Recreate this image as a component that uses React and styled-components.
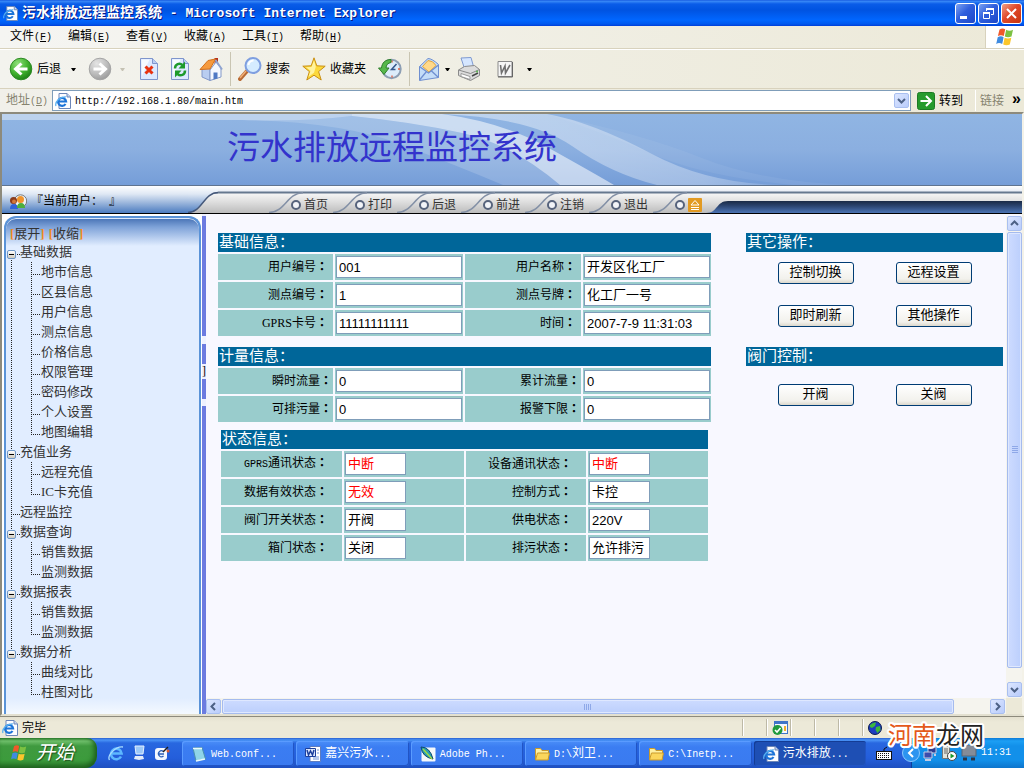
// src/App.jsx
import React from 'react';
import styled, { createGlobalStyle, css } from 'styled-components';

const GlobalStyle = createGlobalStyle`
  * {
    box-sizing: border-box;
  }

  body {
    margin: 0;
    font-family: 'Liberation Serif', 'Noto Sans CJK SC', serif;
    font-size: 12px;
    line-height: 16px;
    color: #000;
  }

  button, input {
    margin: 0;
    padding: 0;
    border: 0;
    border-radius: 0;
    background: none;
    color: inherit;
    font: inherit;
  }

  a {
    color: inherit;
    text-decoration: none;
  }

  svg {
    display: block;
    flex: none;
  }
`;

/* ---------- window ---------- */

const Window = styled.div`
  position: relative;
  display: flex;
  flex-direction: column;
  min-height: 100vh;
  background: #ece9d8;
`;

const Mono = styled.span`
  font-family: 'Liberation Mono', monospace;
  font-size: ${props => props.$size || 10}px;
  white-space: pre;
`;

const TitleBar = styled.header`
  display: flex;
  align-items: center;
  gap: 4px;
  height: 26px;
  padding: 0 2px 0 3px;
  background: linear-gradient(#0a4ad8 0, #3c8cf8 1px, #0a5ce8 4px, #0053e1 10px, #0066ff 20px, #0058ee 24px, #003dd7 26px);
`;

const Title = styled.h1`
  flex: 1;
  margin: 0;
  font-size: 14px;
  font-weight: bold;
  color: #fff;
  text-shadow: 1px 1px #0a1883;
  white-space: nowrap;
`;

const WindowButtons = styled.div`
  display: flex;
  gap: 2px;
`;

const WindowButton = styled.button`
  display: flex;
  align-items: center;
  justify-content: center;
  width: 21px;
  height: 21px;
  border: 1px solid #fff;
  border-radius: 3px;
  background: ${props => (props.$close
    ? 'linear-gradient(135deg, #f0a088, #e0492a 45%, #c8350f)'
    : 'linear-gradient(135deg, #7ba2f2, #2f5fdd 45%, #1d47c8)')};
`;

const MenuBar = styled.nav`
  display: flex;
  height: 23px;
  border-bottom: 1px solid #d8d2bd;
  background: linear-gradient(90deg, #f5f5f2, #ece9d8);
`;

const MenuList = styled.div`
  display: flex;
  flex: 1;
  align-items: center;
  gap: 16px;
  padding-left: 10px;
`;

const MenuItem = styled.button`
  width: 42px;
  white-space: nowrap;
  text-align: left;
`;

const FlagBox = styled.div`
  display: flex;
  align-items: center;
  justify-content: center;
  width: 39px;
  border-left: 1px solid #d8d2bd;
  background: #fff;
`;

const ToolBar = styled.div`
  display: flex;
  align-items: center;
  gap: 7px;
  height: 40px;
  padding-left: 9px;
  border-top: 1px solid #fff;
  border-bottom: 1px solid #d8d2bd;
  background: linear-gradient(90deg, #f3f3ee, #ece9d8);
`;

const Tool = styled.button`
  display: flex;
  align-items: center;
  gap: 4px;
  padding-right: ${props => (props.$wide ? 5 : 0)}px;
  white-space: nowrap;
`;

const Caret = styled.span`
  width: 5px;
  margin-left: ${props => (props.$gap || 0)}px;
  border: solid transparent;
  border-width: 3px 2px 0;
  border-top-color: ${props => (props.$dim ? '#c5c2b4' : '#000')};
`;

const Separator = styled.span`
  width: 1px;
  height: 34px;
  background: #c9c5b2;
`;

const AddressBar = styled.div`
  display: flex;
  align-items: center;
  gap: 6px;
  height: 23px;
  padding: 0 3px 0 6px;
  background: linear-gradient(90deg, #f1f0ea, #ece9d8);
`;

const AddressLabel = styled.label`
  width: 40px;
  color: #86836f;
  white-space: nowrap;
`;

const AddressBox = styled.div`
  display: flex;
  flex: 1;
  align-items: center;
  gap: 4px;
  height: 21px;
  padding: 0 1px 0 2px;
  border: 1px solid #7f9db9;
  background: #fff;
`;

const AddressInput = styled.input`
  flex: 1;
  min-width: 0;
  padding-top: 2px;
  font-family: 'Liberation Mono', monospace;
  font-size: 10px;
  outline: none;
`;

const GoButton = styled.button`
  display: flex;
  align-items: center;
  gap: 4px;
  width: 52px;
  white-space: nowrap;
`;

const Links = styled.div`
  display: flex;
  align-items: center;
  gap: 8px;
  height: 21px;
  padding-left: 4px;
  border-left: 1px solid #fff;
  color: #86836f;
  white-space: nowrap;
`;

const More = styled.span`
  padding-bottom: 4px;
  color: #000;
  font-family: 'Liberation Sans', sans-serif;
  font-size: 16px;
  font-weight: bold;
`;

/* ---------- page ---------- */

const Page = styled.div`
  display: flex;
  flex: 1;
  flex-direction: column;
  border: solid #8d8a7c;
  border-width: 2px 0 0 2px;
  border-right: 2px solid #f4f2e8;
  border-bottom: 2px solid #e3e0d0;
  background: #fff;
`;

const Banner = styled.div`
  position: relative;
  height: 71px;
  padding: 11px 0 0 225px;
  overflow: hidden;
  background: linear-gradient(#90b5e3, #8bafe0 50%, #759dd8);
`;

const BannerArt = styled.svg`
  position: absolute;
  top: 0;
  left: 0;
`;

const BannerTitle = styled.h2`
  position: relative;
  margin: 0;
  font-size: 33px;
  font-weight: 400;
  line-height: 46px;
  color: #3333cc;
  white-space: nowrap;
`;

const NavBar = styled.nav`
  display: flex;
  height: 29px;
  border-top: 1px solid #5f7490;
  border-bottom: 1px solid #000;
  background: linear-gradient(#fff 0, #e9eef6 5px, #66788f 6px, #66788f 7px, #f4f4f4 8px, #dedede 16px, #bcbcbc 27px);
`;

const UserArea = styled.div`
  display: flex;
  align-items: center;
  gap: 4px;
  width: 186px;
  padding: 4px 0 0 7px;
  background: linear-gradient(#fff, #dfe8f4 8px, #4c7cc0 27px);
  white-space: pre;
`;

const Tabs = styled.div`
  display: flex;
  padding-left: 51px;
`;

const Tab = styled.a`
  position: relative;
  display: flex;
  align-items: center;
  gap: 3px;
  width: ${props => (props.$last ? 53 : 64)}px;
  padding: 10px 0 0 22px;
  color: #333;
  line-height: 16px;
  white-space: nowrap;
`;

const TabEdge = styled.svg`
  position: absolute;
  top: 6px;
  left: 0;
`;

const Dot = styled.span`
  flex: none;
  width: 10px;
  height: 10px;
  border: 2px solid #56637c;
  border-radius: 50%;
  background: #f2f4f8;
`;

const NavRest = styled.div`
  flex: 1;
  margin-top: 15px;
  background: linear-gradient(#1a2a45, #2c4570 5px, #4c74b4);
`;

const Body = styled.div`
  display: flex;
  flex: 1;
`;

const Side = styled.aside`
  display: flex;
  width: 200px;
  padding: 2px 1px 0 2px;
  background: #fff;
`;

const SidePanel = styled.div`
  flex: 1;
  border: 2px solid #5a93d8;
  border-bottom: 0;
  border-radius: 12px 12px 0 0;
  box-shadow: inset 0 1px #dce9fa;
  background: linear-gradient(#4671b4 0, #7ea2d8 9px, #e1edff 28px, #e1edff calc(100% - 16px), #f4f9ff);
  color: #333;
  font-size: 13px;
`;

const TreeHead = styled.div`
  display: flex;
  gap: 4px;
  height: 24px;
  padding: 8px 0 0 4px;
`;

const Bracket = styled.span`
  color: #f08a1c;
  font-weight: bold;
`;

const TreeRow = styled.div`
  display: flex;
  height: 20px;
  line-height: 20px;
  white-space: nowrap;
`;

const dots = 'repeating-linear-gradient(#222 0 1px, transparent 1px 2px)';
const dashes = 'repeating-linear-gradient(90deg, #222 0 1px, transparent 1px 2px)';

const Rail = styled.span`
  width: 14px;
  padding: 8px 0 0 1px;
  background-repeat: no-repeat;
  ${props => props.$line === 'full' && css`
    background-image: ${dots}, ${dashes};
    background-position: 5px 0, 5px 12px;
    background-size: 1px 100%, ${props.$leaf ? 0 : 9}px 1px;
  `}
  ${props => props.$line === 'start' && css`
    background-image: ${dots}, ${dashes};
    background-position: 5px 12px, 5px 12px;
    background-size: 1px 8px, 9px 1px;
  `}
  ${props => props.$line === 'end' && css`
    background-image: ${dots}, ${dashes};
    background-position: 5px 0, 5px 12px;
    background-size: 1px 12px, 9px 1px;
  `}
`;

const Branch = styled.span`
  width: 10px;
  margin-left: 11px;
  background-image: ${dots}, ${dashes};
  background-repeat: no-repeat;
  background-position: 0 0, 0 12px;
  background-size: 1px ${props => (props.$last ? '12px' : '100%')}, 100% 1px;
`;

const Toggle = styled.button`
  display: flex;
  align-items: center;
  justify-content: center;
  width: 9px;
  height: 9px;
  border: 1px solid #6f98c8;
  border-radius: 2px;
  background: linear-gradient(#fff, #cfcabd);
`;

const Divider = styled.div`
  display: flex;
  flex-direction: column;
  width: 4px;
  padding-top: 2px;
  background: #eef1ff;
`;

const DividerBar = styled.span`
  height: ${props => props.$height}px;
  margin-bottom: ${props => props.$gap || 0}px;
  background: #6c7be0;
`;

const DividerRest = styled.span`
  flex: 1;
  background: #6c7be0;
`;

const DividerGrip = styled.button`
  display: flex;
  justify-content: center;
  height: 15px;
  overflow: hidden;
  line-height: 15px;
`;

const Frame = styled.main`
  display: grid;
  flex: 1;
  grid-template-columns: minmax(0, 1fr) 16px;
  grid-template-rows: minmax(0, 1fr) 16px;
  padding-top: 2px;
  background: #f8f8ff;
`;

const Content = styled.div`
  display: grid;
  grid-template-columns: minmax(0, 497fr) minmax(0, 257fr);
  gap: 33px;
  padding: 17px 3px 0 10px;
`;

const Section = styled.section`
  margin: 0 ${props => (props.$inset ? 3 : 0)}px ${props => (props.$tight ? 6 : 9)}px;
`;

const SectionTitle = styled.h3`
  height: 19px;
  margin: 0 ${props => (props.$flush ? 0 : 2)}px;
  padding-left: 1px;
  background: #006699;
  color: #fff;
  font-size: 15px;
  font-weight: normal;
  line-height: 18px;
`;

const InfoTable = styled.table`
  width: 100%;
  table-layout: fixed;
  border-spacing: 2px;
`;

const LabelCell = styled.th`
  width: ${props => props.$width}px;
  height: 26px;
  padding: 0 ${props => props.$pad}px 2px 0;
  background: #99cccc;
  font-weight: normal;
  text-align: right;
  white-space: nowrap;
`;

const Colon = styled.span`
  font-family: 'Noto Sans CJK TC', sans-serif;
  font-weight: bold;
`;

const ValueCell = styled.td`
  width: ${props => props.$width}px;
  height: 26px;
  padding: 2px 1px;
  background: #99cccc;
`;

const Field = styled.input`
  display: block;
  width: ${props => (props.$short ? '61px' : '100%')};
  height: 22px;
  padding: 0 2px ${props => (props.$raised ? 4 : 0)}px;
  border: 1px solid #7f9db9;
  background: #fff;
  color: ${props => (props.$alert ? '#ff0000' : '#000')};
  font-family: 'Liberation Sans', 'Noto Sans CJK SC', sans-serif;
  font-size: 13px;
`;

const Actions = styled.div`
  display: grid;
  grid-template-columns: 76px 76px;
  justify-content: center;
  gap: 21px 42px;
  padding: ${props => (props.$low ? 18 : 10)}px 0 20px;
`;

const ActionButton = styled.button`
  height: 22px;
  padding-bottom: 2px;
  border: 1px solid #003c74;
  border-radius: 3px;
  background: linear-gradient(#fff, #f2f1ec 80%, #dcd8cc);
  font-size: 13px;
  line-height: 18px;
`;

const ScrollBar = styled.div`
  display: flex;
  flex-direction: ${props => (props.$vertical ? 'column' : 'row')};
  gap: 1px;
  padding: ${props => (props.$vertical ? '0 0 1px 1px' : '1px 1px 0 0')};
  background: #f5f4ee;
`;

const ScrollButton = styled.button`
  display: flex;
  flex: none;
  align-items: center;
  justify-content: center;
  width: 15px;
  height: 15px;
  border: 1px solid #a9bff0;
  border-radius: 2px;
  background: linear-gradient(135deg, #dce6ff, #b9ccfb);
`;

const Thumb = styled.div`
  display: flex;
  flex: ${props => props.$size} 1 0;
  align-items: center;
  justify-content: center;
  border: 1px solid #a5bbee;
  border-radius: 2px;
  box-shadow: inset 0 0 0 1px #dfe8ff;
  background: linear-gradient(${props => (props.$vertical ? '90deg' : '180deg')}, #cddbff, #bccffc);
`;

const ThumbSpace = styled.div`
  flex: ${props => props.$size} 1 0;
`;

const Corner = styled.div`
  background: #ece9d8;
`;

/* ---------- status bar and task bar ---------- */

const StatusBar = styled.footer`
  display: flex;
  align-items: center;
  gap: 4px;
  height: 22px;
  padding: 0 2px;
  border-top: 1px solid #8d8a7c;
  background: linear-gradient(#e4e0cf, #ece9d8 5px);
`;

const StatusText = styled.span`
  flex: 1;
`;

const StatusPanes = styled.div`
  display: flex;
`;

const Pane = styled.span`
  display: flex;
  align-items: center;
  gap: 4px;
  width: ${props => (props.$wide ? 160 : 24)}px;
  height: 17px;
  padding-left: 5px;
  border-left: 1px solid #bdb9a6;
  box-shadow: inset 1px 0 #fff;
`;

const TaskBar = styled.footer`
  display: flex;
  height: 30px;
  background: linear-gradient(#2a5fd0 0, #4a94f6 2px, #2867e0 5px, #245edb 20px, #1e4fc0 30px);
  color: #fff;
`;

const StartButton = styled.button`
  display: flex;
  align-items: center;
  gap: 8px;
  width: 97px;
  padding-left: 10px;
  border-radius: 0 10px 12px 0;
  box-shadow: inset -3px -2px 5px #1c5f1c;
  background: linear-gradient(#2f7f2f, #6fbf6b 3px, #3f9a3f 8px, #3c9b3c 22px, #2d7d2d);
  font-size: 19px;
  font-style: italic;
  line-height: 26px;
  text-shadow: 1px 1px 1px #1d4f1d;
  white-space: nowrap;
`;

const QuickLaunch = styled.div`
  display: flex;
  align-items: center;
  gap: 7px;
  width: 85px;
  padding-left: 11px;
`;

const TaskList = styled.div`
  display: flex;
  flex: 1;
  gap: 2px;
  padding: 3px 0 2px;
`;

const Task = styled.button`
  display: flex;
  flex: 1;
  align-items: center;
  gap: 4px;
  min-width: 0;
  padding-left: 9px;
  border-radius: 3px;
  box-shadow: inset 1px 1px ${props => (props.$active ? '#143c94' : '#5a9bff')}, inset -1px -1px #2154c4;
  background: ${props => (props.$active ? '#1e4fb4' : 'linear-gradient(#4a8ef8, #3b7df2 6px, #3a7af0)')};
  white-space: nowrap;
`;

const Keyboard = styled.div`
  display: flex;
  align-items: center;
  width: 45px;
  padding-left: 10px;
`;

const Tray = styled.div`
  position: relative;
  display: flex;
  align-items: center;
  gap: 4px;
  width: 113px;
  padding-left: 11px;
  border-left: 1px solid #0b3f9c;
  background: linear-gradient(#0c7ad8, #1c9ff4 3px, #1290ea 8px, #1290ea 22px, #0d74cc);
`;

const TrayToggle = styled.button`
  position: absolute;
  top: 6px;
  left: -10px;
`;

const Watermark = styled.div`
  position: absolute;
  right: 40px;
  bottom: 21px;
  color: #222;
  font-family: 'Noto Sans CJK SC', sans-serif;
  font-size: 24px;
  line-height: 26px;
  text-shadow: 2px 0 #fff, -2px 0 #fff, 0 2px #fff, 0 -2px #fff, 1px 2px #fff, -1px 2px #fff, 1px -2px #fff, -1px -2px #fff, 2px 1px #fff, -2px 1px #fff, 2px -1px #fff, -2px -1px #fff;
`;

const Accent = styled.span`
  color: #e4591a;
`;

/* ---------- icons ---------- */

const IePage = ({ size = 16 }) => (
  <svg width={size} height={size} viewBox="0 0 16 16">
    <path d="M4 .5h8l3.500 3.500v11.500H4z" fill="#fdfdff" stroke="#6c86b8" />
    <path d="M12 .5V4h3.500" fill="#c9d8f0" stroke="#6c86b8" />
    <path d="M10.500 11a4 4 0 1 1 .6-2.500H3.500" fill="none" stroke="#1d74d8" strokeWidth="2.200" />
    <path d="M1 13C-.5 9 5 3.500 11 4" fill="none" stroke="#58b0f0" strokeWidth="1.200" />
  </svg>
);

const IeLogo = () => (
  <svg width="16" height="16" viewBox="0 0 16 16">
    <path d="M13 11.500A5.300 5.300 0 1 1 13.600 8.500H4" fill="none" stroke="#5db8ff" strokeWidth="2.600" />
    <path d="M1.500 15C-1 11 7 1 15 2" fill="none" stroke="#a8dcff" strokeWidth="1.300" />
  </svg>
);

const Flag = ({ size = 20 }) => (
  <svg width={size} height={size} viewBox="0 0 20 20">
    <path d="M4.500 2.500Q7.500.5 10.200 2.300L8.800 9Q6 7.300 2.900 9z" fill="#f0592a" />
    <path d="M11.200 2.800Q14.500 4.500 18 2.800L16.500 9.500Q13 11 9.800 9.500z" fill="#7cc142" />
    <path d="M2.700 10.200Q6 8.500 8.600 10.200L7.200 17Q4 15.200 1.200 17z" fill="#3f8be0" />
    <path d="M9.600 10.700Q13 12.300 16.300 10.700L14.800 17.500Q11.500 19 8.200 17.500z" fill="#fbc62c" />
  </svg>
);

const ArrowCircle = ({ forward }) => (
  <svg width="24" height="24" viewBox="0 0 24 24">
    <defs>
      <radialGradient id={forward ? 'fwd' : 'bck'} cx=".35" cy=".25" r=".8">
        <stop offset="0" stopColor={forward ? '#e4e4e4' : '#8fe07a'} />
        <stop offset=".6" stopColor={forward ? '#bcbcbc' : '#3fb02c'} />
        <stop offset="1" stopColor={forward ? '#9a9a9a' : '#1c7d16'} />
      </radialGradient>
    </defs>
    <circle cx="12" cy="12" r="10.800" fill={`url(#${forward ? 'fwd' : 'bck'})`} stroke={forward ? '#a5a5a5' : '#2d8a24'} />
    <path
      d={forward ? 'M5.500 12h11M11.500 6.500 17.500 12l-6 5.500' : 'M18.500 12h-11M12.500 6.500 6.500 12l6 5.500'}
      fill="none"
      stroke="#fff"
      strokeWidth="3"
    />
  </svg>
);

const PageShape = ({ children }) => (
  <svg width="24" height="24" viewBox="0 0 24 24">
    <path d="M3.500 1.500h12l5 5v16h-17z" fill="#dce9ff" stroke="#7f95cc" />
    <path d="M4.500 2.500h8L5 19z" fill="#f6faff" />
    <path d="M15.500 1.500v5h5" fill="#b9cdf2" stroke="#7f95cc" />
    {children}
  </svg>
);

const StopIcon = () => (
  <PageShape>
    <path d="m8.500 9.500 7 7m0-7-7 7" stroke="#e8320f" strokeWidth="3" />
  </PageShape>
);

const RefreshIcon = () => (
  <PageShape>
    <path d="M7 11.500c0-4.500 4.500-6 7.500-3.500" fill="none" stroke="#1c9a2c" strokeWidth="2.500" />
    <path d="M17 4.500v7h-6.500z" fill="#1c9a2c" />
    <path d="M17 13.500c0 4.500-4.500 6-7.500 3.500" fill="none" stroke="#1c9a2c" strokeWidth="2.500" />
    <path d="M7 20.500v-7h6.500z" fill="#1c9a2c" />
  </PageShape>
);

const HomeIcon = () => (
  <svg width="24" height="24" viewBox="0 0 24 24">
    <path d="M15.500 1h3.500v7h-3.500z" fill="#b5321c" />
    <path d="M3 12v8l8 3.500V11z" fill="#b9cdf0" stroke="#8298c8" />
    <path d="M11 23.500 22 20v-9l-5-6-6 8z" fill="#f4f8ff" stroke="#8298c8" />
    <path d="M1 12.500 9 3.500 16.500 2 11 12z" fill="#f59a3e" stroke="#d3701c" />
    <path d="m16.500 3 6.500 9.500" stroke="#8ea3d0" strokeWidth="2" />
    <path d="M14.500 15.500h4v6l-4 1z" fill="#4f79c4" />
  </svg>
);

const SearchIcon = () => (
  <svg width="24" height="24" viewBox="0 0 24 24">
    <path d="m2 22 7-8" stroke="#b86a34" strokeWidth="4" strokeLinecap="round" />
    <path d="m2 21 6-7" stroke="#f0b078" strokeWidth="1.500" />
    <circle cx="15" cy="8.500" r="7.500" fill="#d5ecff" stroke="#7f9fe0" strokeWidth="2" />
    <path d="M10.500 8a5 5 0 0 1 5-4.500" fill="none" stroke="#fff" strokeWidth="2" />
  </svg>
);

const StarIcon = () => (
  <svg width="24" height="24" viewBox="0 0 24 24">
    <path d="m12 .8 2.800 8 8.400.4-6.600 5.400 2.600 8.400L12 18.200 4.800 23l2.600-8.400L.8 9.200l8.400-.4z" fill="#fcd93c" stroke="#c98f12" />
    <path d="m12 3.500 1.800 6.300-1.800 6-5.500 4 2-6-4.500-3.500 5.500-.3z" fill="#fff3a0" />
  </svg>
);

const HistoryIcon = () => (
  <svg width="24" height="24" viewBox="0 0 24 24">
    <circle cx="13.500" cy="12" r="9.200" fill="#dcecfa" stroke="#8d9fb4" strokeWidth="2" />
    <path d="m18.500 7-5 5.500h4" fill="none" stroke="#33568c" strokeWidth="1.500" />
    <path d="M14 3.500v2M22 12h-2M14 20.500v-2" stroke="#e05a3c" strokeWidth="1.300" />
    <path d="M13 2.500C7 2.500 4 6 3.500 11H.5L6 17.500 11 11H8c0-3 2-5 5-5.500z" fill="#57b84c" stroke="#2f7f2c" />
  </svg>
);

const MailIcon = () => (
  <svg width="24" height="24" viewBox="0 0 24 24">
    <path d="M2.500 9.500 11 1.500q4 0 10.500 6v13l-19 3z" fill="#c4ddf8" stroke="#6f8fd0" />
    <path d="M5.500 9.500 11 3.500q5 0 8 5l-7 6.500z" fill="#ffd98a" stroke="#e0a43c" />
    <path d="m2.500 9.500 9 6.500 10-8M2.500 23l7-8.500m12 6-7-6.500" fill="none" stroke="#6f8fd0" strokeWidth="1.300" />
  </svg>
);

const PrintIcon = () => (
  <svg width="24" height="24" viewBox="0 0 24 24">
    <path d="m4 1 10-.5 2.500 9-9 2z" fill="#d5e6ff" stroke="#7f9ad0" />
    <path d="m1.500 13 6-3.500 10-1 5 4v6l-9 5-12-5z" fill="#dcdcdc" stroke="#8a8a8a" />
    <path d="m1.500 13 12 3.500 9-4" fill="none" stroke="#8a8a8a" />
    <path d="m4 16.500 9 3v3l-9-3z" fill="#fff" stroke="#999" />
    <path d="m15 19 6-3" stroke="#444" strokeWidth="1.500" />
    <circle cx="20" cy="14.500" r="1" fill="#57b84c" />
  </svg>
);

const WordIcon = () => (
  <svg width="24" height="24" viewBox="0 0 24 24">
    <path d="M5 4.500h14v15H5z" fill="#f6f6f6" stroke="#8a8a8a" />
    <path d="M19.500 5v15H5" fill="none" stroke="#666" />
    <path d="m7.500 8 1 8L12 9l.5 7L17 8" fill="none" stroke="#707070" strokeWidth="1.600" />
  </svg>
);

const GoIcon = () => (
  <svg width="18" height="18" viewBox="0 0 18 18">
    <rect x=".5" y=".5" width="17" height="17" rx="2" fill="#259a2c" stroke="#1c7a24" />
    <path d="M3.500 9h10M9 4l5 5-5 5" fill="none" stroke="#fff" strokeWidth="2" />
  </svg>
);

const Chevron = ({ dir }) => {
  const paths = {
    up: 'M1 6 4.500 2.500 8 6',
    down: 'M1 3 4.500 6.500 8 3',
    left: 'M6 1 2.500 4.500 6 8',
    right: 'M3 1 6.500 4.500 3 8',
  };
  return (
    <svg width="9" height="9" viewBox="0 0 9 9">
      <path d={paths[dir]} fill="none" stroke="#4d6185" strokeWidth="2" />
    </svg>
  );
};

const Grip = ({ vertical }) => (
  <svg width="8" height="8" viewBox="0 0 8 8">
    <path d={vertical ? 'M1 .5h6m-6 2h6m-6 2h6m-6 2h6' : 'M.5 1v6m2-6v6m2-6v6m2-6v6'} stroke="#8ea8e8" />
  </svg>
);

const UsersIcon = () => (
  <svg width="18" height="16" viewBox="0 0 18 16">
    <circle cx="11.500" cy="7" r="6.200" fill="#eef2f6" stroke="#777" />
    <path d="M1 15q0-5 4-5t4 5z" fill="#2f63d8" />
    <path d="M8 14q0-5 4-5t4 5z" fill="#4cae3c" />
    <circle cx="4.500" cy="6.500" r="3.500" fill="#8a3c1c" />
    <circle cx="5" cy="7.500" r="2" fill="#d2783c" />
    <circle cx="11.500" cy="5.500" r="3.500" fill="#f0942c" />
  </svg>
);

const UpIcon = () => (
  <svg width="14" height="14" viewBox="0 0 14 14">
    <rect width="14" height="14" rx="1" fill="#e29a22" />
    <path d="M7 2.500 11 7H3zM3 9.500h8M3 11.500h8" fill="none" stroke="#fff" />
  </svg>
);

const NotepadIcon = () => (
  <svg width="16" height="16" viewBox="0 0 16 16">
    <path d="m2 2 9-.5L14.500 13 5 15z" fill="#8fd4e8" stroke="#4a8fae" />
    <path d="M2 2.500h9M5 15l9-2" stroke="#e8f8fc" strokeWidth="1.500" />
  </svg>
);

const WordDocIcon = () => (
  <svg width="16" height="16" viewBox="0 0 16 16">
    <path d="M5 .5h10.500v15H5z" fill="#fff" stroke="#5d7cc0" />
    <path d="M8 11h6m-6 2h6M12 4h2m-2 3h2" stroke="#6f94d8" />
    <path d="M.5 2.500h10v8H.5z" fill="#dce8ff" stroke="#1c3f9c" />
    <path d="m2 4 1.500 5 2-4 2 4L9 4" fill="none" stroke="#1c3f9c" strokeWidth="1.500" />
  </svg>
);

const PhotoIcon = () => (
  <svg width="16" height="16" viewBox="0 0 16 16">
    <rect x="1.500" y="1.500" width="14" height="14" rx="1" fill="#f4f8fa" />
    <path d="M1 1q9 0 12 12Q2 11 1 1z" fill="#2a9cb4" stroke="#0c4a6c" />
    <path d="m3 3 9 10" stroke="#a5e03c" strokeWidth="1.300" />
  </svg>
);

const FolderIcon = () => (
  <svg width="16" height="16" viewBox="0 0 16 16">
    <path d="M1.500 13.500v-11h5l1.500 2h6.500v9z" fill="#fff0a0" stroke="#c99a2c" />
    <path d="m1.500 14 2-7h12l-1.500 7z" fill="#fbd65c" stroke="#c99a2c" />
  </svg>
);

const ComputerIcon = () => (
  <svg width="16" height="16" viewBox="0 0 16 16">
    <path d="M4 1h9l-1 8H5z" fill="#9cc8f8" stroke="#e4f0ff" />
    <path d="M4 11h8l1 3-5 1-5-1z" fill="#e4ecf8" />
  </svg>
);

const ToolsIcon = () => (
  <svg width="16" height="16" viewBox="0 0 16 16">
    <rect x="1" y="3" width="12" height="12" rx="3" fill="#f4f8ff" />
    <path d="M9.500 6.500a3 3 0 1 0 0 4.500M5 9h5" fill="none" stroke="#2c5fb8" strokeWidth="1.300" />
    <path d="m9 7 5-5" stroke="#1c1c1c" strokeWidth="1.500" />
    <circle cx="14" cy="6" r="1.500" fill="#e05a2c" />
  </svg>
);

const CheckPageIcon = () => (
  <svg width="16" height="16" viewBox="0 0 16 16">
    <rect x="2.500" y="1.500" width="13" height="12" fill="#f4f8ff" stroke="#3f74c8" />
    <path d="M2 2.500h14" stroke="#3f74c8" strokeWidth="3" />
    <path d="M13 6v5" stroke="#f0b02c" strokeWidth="2" />
    <circle cx="5.500" cy="10" r="5" fill="#1f9a3c" />
    <path d="m3 10 2 2 3.500-4" fill="none" stroke="#fff" strokeWidth="1.600" />
  </svg>
);

const GlobeIcon = () => (
  <svg width="14" height="14" viewBox="0 0 14 14">
    <circle cx="7" cy="7" r="6.500" fill="#1c3cc0" stroke="#0c1c50" />
    <path d="M2 4q3-3 6-2.500L7 5 4 7 2 6zM8 6l4-1 .5 4-3 3-2-3z" fill="#3cb83c" />
  </svg>
);

const KeyboardIcon = () => (
  <svg width="16" height="16" viewBox="0 0 16 16">
    <path d="M8 6V4l3-2" fill="none" stroke="#111" />
    <rect x=".5" y="6.500" width="15" height="8" fill="#fff" stroke="#111" />
    <path d="M2 8.500h12M2 10.500h12M2 12.500h12" stroke="#111" strokeDasharray="1 1" />
  </svg>
);

const NetworkIcon = () => (
  <svg width="14" height="16" viewBox="0 0 14 16">
    <path d="M5 2h8v6H5z" fill="#2c3c90" stroke="#c4cce4" />
    <path d="M1 7h8v6H1z" fill="#3c4cac" stroke="#c4cce4" />
    <path d="M2 15h6m3-5h2" stroke="#c4cce4" strokeWidth="2" />
  </svg>
);

const ServerIcon = () => (
  <svg width="16" height="16" viewBox="0 0 16 16">
    <path d="M1.500 1.500h7v12h-7z" fill="#e4e4dc" stroke="#777" />
    <path d="M3 4h4M3 6h4M3 8h4" stroke="#666" />
    <circle cx="11" cy="11" r="4.500" fill="#fff" stroke="#444" />
    <path d="m9.500 8.500 4 2.500-4 2.500z" fill="#1f9a2c" />
  </svg>
);

const MonitorIcon = () => (
  <svg width="16" height="16" viewBox="0 0 16 16">
    <rect x="1" y="0" width="14" height="11" fill="#848c98" stroke="#5c6470" />
    <path d="M2 14h4m4 0h4" stroke="#2c3444" strokeWidth="3" />
  </svg>
);

/* ---------- data ---------- */

const menus = [
  ['文件', 'F'],
  ['编辑', 'E'],
  ['查看', 'V'],
  ['收藏', 'A'],
  ['工具', 'T'],
  ['帮助', 'H'],
];

const tabs = ['首页', '打印', '后退', '前进', '注销', '退出'];

const tree = [
  {
    name: '基础数据',
    items: ['地市信息', '区县信息', '用户信息', '测点信息', '价格信息', '权限管理', '密码修改', '个人设置', '地图编辑'],
  },
  { name: '充值业务', items: ['远程充值', 'IC卡充值'] },
  { name: '远程监控', items: [] },
  { name: '数据查询', items: ['销售数据', '监测数据'] },
  { name: '数据报表', items: ['销售数据', '监测数据'] },
  { name: '数据分析', items: ['曲线对比', '柱图对比'] },
];

const basicRows = [
  [['用户编号', '001'], ['用户名称', '开发区化工厂']],
  [['测点编号', '1'], ['测点号牌', '化工厂一号']],
  [['GPRS卡号', '11111111111'], ['时间', '2007-7-9 11:31:03']],
];

const meterRows = [
  [['瞬时流量', '0'], ['累计流量', '0']],
  [['可排污量', '0'], ['报警下限', '0']],
];

const stateRows = [
  [[<><Mono>GPRS</Mono>通讯状态</>, '中断', true], ['设备通讯状态', '中断', true]],
  [['数据有效状态', '无效', true], ['控制方式', '卡控']],
  [['阀门开关状态', '开阀'], ['供电状态', '220V']],
  [['箱门状态', '关闭'], ['排污状态', '允许排污']],
];

const tasks = [
  { icon: <NotepadIcon />, latin: 'Web.conf...' },
  { icon: <WordDocIcon />, text: '嘉兴污水', latin: '...' },
  { icon: <PhotoIcon />, latin: 'Adobe Ph...' },
  { icon: <FolderIcon />, prefix: 'D:\\', text: '刘卫', latin: '...' },
  { icon: <FolderIcon />, latin: 'C:\\Inetp...' },
  { icon: <IePage />, text: '污水排放', latin: '...', active: true },
];

// Chinese values sit a little higher in their box than digits do
const isChinese = value => /[\u4e00-\u9fff]/.test(value);

/* ---------- parts ---------- */

const BannerCurves = () => (
  <BannerArt width="1020" height="71" viewBox="0 0 1020 71" aria-hidden="true">
    <defs>
      <linearGradient id="haze" x1="0" x2="1" y1="0" y2="0">
        <stop offset="0" stopColor="#fff" stopOpacity=".42" />
        <stop offset=".75" stopColor="#fff" stopOpacity=".3" />
        <stop offset="1" stopColor="#fff" stopOpacity=".1" />
      </linearGradient>
    </defs>
    <path d="M0 0H350V2Q300 8 240 6H0z" fill="#fff" opacity=".4" />
    <path d="M240 6Q340 8 398 30T501 71H558Q510 30 460 19T350 2Q300 8 240 6z" fill="#fff" opacity=".16" />
    <path d="M350 0H440Q500 8 545 33T612 71H558Q510 30 460 19T350 2z" fill="#fff" opacity=".55" />
    <path d="M440 0H545Q590 8 650 40T790 71H655Q610 60 570 32T440 0z" fill="url(#haze)" />
    <path d="M545 0Q640 20 700 44T850 71H790Q700 62 650 40T545 0z" fill="#fff" opacity=".06" />
  </BannerArt>
);

const NavStart = () => (
  <svg width="30" height="27" viewBox="0 0 30 27">
    <defs>
      <linearGradient id="navBlue" x1="0" x2="0" y1="0" y2="1">
        <stop offset="0" stopColor="#fff" />
        <stop offset=".3" stopColor="#dfe8f4" />
        <stop offset="1" stopColor="#4c7cc0" />
      </linearGradient>
    </defs>
    <path d="M0 0H30V6C16 6 14 27 0 27z" fill="url(#navBlue)" />
    <path d="M30 6.500C16 6.500 14 26.500 0 26.500" fill="none" stroke="#45587a" strokeWidth="1.500" />
  </svg>
);

const NavEnd = () => (
  <svg width="22" height="27" viewBox="0 0 22 27">
    <defs>
      <linearGradient id="navDark" x1="0" x2="0" y1="15" y2="27" gradientUnits="userSpaceOnUse">
        <stop offset="0" stopColor="#1a2a45" />
        <stop offset=".4" stopColor="#2c4570" />
        <stop offset="1" stopColor="#4c74b4" />
      </linearGradient>
    </defs>
    <path d="M22 15C10 15 12 27 0 27H22z" fill="url(#navDark)" />
  </svg>
);

const Tree = () => (
  <div>
    {tree.map((group, g) => {
      const lastGroup = g === tree.length - 1;
      const line = g === 0 ? 'start' : lastGroup ? 'end' : 'full';
      return (
        <div key={group.name}>
          <TreeRow>
            <Rail $line={line}>
              {group.items.length > 0 && (
                <Toggle aria-label={group.name}>
                  <svg width="5" height="1"><rect width="5" height="1" fill="#000" /></svg>
                </Toggle>
              )}
            </Rail>
            <a href="#tree">{group.name}</a>
          </TreeRow>
          {group.items.map((item, i) => (
            <TreeRow key={item}>
              <Rail $line={lastGroup ? 'none' : 'full'} $leaf />
              <Branch $last={i === group.items.length - 1} />
              <a href="#tree">{item}</a>
            </TreeRow>
          ))}
        </div>
      );
    })}
  </div>
);

const InfoSection = ({ id, title, rows, widths, pad, short, tight }) => (
  <Section $inset={short} $tight={tight}>
    <SectionTitle>{title}：</SectionTitle>
    <InfoTable>
      <tbody>
        {rows.map((row, r) => (
          <tr key={r}>
            {row.map(([label, value, alert], c) => (
              <React.Fragment key={c}>
                <LabelCell $width={widths[c * 2]} $pad={pad}>
                  <label htmlFor={`${id}-${r}-${c}`}>{label}<Colon>：</Colon></label>
                </LabelCell>
                <ValueCell $width={widths[c * 2 + 1]}>
                  <Field
                    id={`${id}-${r}-${c}`}
                    defaultValue={value}
                    $short={short}
                    $alert={alert}
                    $raised={isChinese(value)}
                  />
                </ValueCell>
              </React.Fragment>
            ))}
          </tr>
        ))}
      </tbody>
    </InfoTable>
  </Section>
);

const App = () => (
  <Window>
    <GlobalStyle />

    <TitleBar>
      <IePage size={15} />
      <Title>污水排放远程监控系统<Mono $size={13}> - Microsoft Internet Explorer</Mono></Title>
      <WindowButtons>
        <WindowButton aria-label="最小化">
          <svg width="13" height="13"><path d="M1 10.500h7" stroke="#fff" strokeWidth="3" /></svg>
        </WindowButton>
        <WindowButton aria-label="还原">
          <svg width="13" height="13">
            <path d="M4.500 4V1.500h7v6H9" fill="none" stroke="#fff" />
            <path d="M4 2h8" stroke="#fff" strokeWidth="2" />
            <path d="M1.500 5.500h6v6h-6z" fill="none" stroke="#fff" />
            <path d="M1 6h7" stroke="#fff" strokeWidth="2" />
          </svg>
        </WindowButton>
        <WindowButton $close aria-label="关闭">
          <svg width="13" height="13"><path d="m2 2 9 9m0-9-9 9" stroke="#fff" strokeWidth="2" /></svg>
        </WindowButton>
      </WindowButtons>
    </TitleBar>

    <MenuBar>
      <MenuList>
        {menus.map(([name, key]) => (
          <MenuItem key={key}>{name}<Mono>(<u>{key}</u>)</Mono></MenuItem>
        ))}
      </MenuList>
      <FlagBox><Flag size={20} /></FlagBox>
    </MenuBar>

    <ToolBar>
      <Tool $wide><ArrowCircle />后退<Caret $gap={6} /></Tool>
      <Tool $wide aria-label="前进"><ArrowCircle forward /><Caret $gap={4} $dim /></Tool>
      <Tool aria-label="停止"><StopIcon /></Tool>
      <Tool aria-label="刷新"><RefreshIcon /></Tool>
      <Tool aria-label="主页"><HomeIcon /></Tool>
      <Separator />
      <Tool $wide><SearchIcon />搜索</Tool>
      <Tool $wide><StarIcon />收藏夹</Tool>
      <Tool aria-label="历史"><HistoryIcon /></Tool>
      <Separator />
      <Tool aria-label="邮件"><MailIcon /><Caret /></Tool>
      <Tool $wide aria-label="打印"><PrintIcon /></Tool>
      <Tool aria-label="编辑"><WordIcon /><Caret $gap={6} /></Tool>
    </ToolBar>

    <AddressBar>
      <AddressLabel htmlFor="address">地址<Mono>(<u>D</u>)</Mono></AddressLabel>
      <AddressBox>
        <IePage />
        <AddressInput id="address" defaultValue="http://192.168.1.80/main.htm" />
        <ScrollButton aria-label="展开地址"><Chevron dir="down" /></ScrollButton>
      </AddressBox>
      <GoButton><GoIcon />转到</GoButton>
      <Links>链接<More>»</More></Links>
    </AddressBar>

    <Page>
      <Banner>
        <BannerCurves />
        <BannerTitle>污水排放远程监控系统</BannerTitle>
      </Banner>

      <NavBar>
        <UserArea><UsersIcon /><span>『当前用户：<Mono> </Mono>』</span></UserArea>
        <NavStart />
        <Tabs>
          {[...tabs, ''].map((name, i) => (
            <Tab key={i} href="#nav" $last={!name}>
              <TabEdge width="34" height="21" viewBox="0 0 34 21">
                <path d="M34 .8C18 .8 16 20.500 0 20.500" fill="none" stroke="#8390a6" strokeWidth="1.500" />
              </TabEdge>
              <Dot />
              {name || <UpIcon />}
            </Tab>
          ))}
        </Tabs>
        <NavEnd />
        <NavRest />
      </NavBar>

      <Body>
        <Side>
          <SidePanel>
            <TreeHead>
              <a href="#open"><Bracket>[</Bracket>展开<Bracket>]</Bracket></a>
              <a href="#close"><Bracket>[</Bracket>收缩<Bracket>]</Bracket></a>
            </TreeHead>
            <Tree />
          </SidePanel>
        </Side>

        <Divider>
          <DividerBar $height={120} $gap={8} />
          <DividerBar $height={20} />
          <DividerGrip>]</DividerGrip>
          <DividerBar $height={20} $gap={7} />
          <DividerRest />
        </Divider>

        <Frame>
          <Content>
            <div>
              <InfoSection id="basic" title="基础信息" rows={basicRows} widths={[115, 128, 116, 128]} pad={5} />
              <InfoSection id="meter" title="计量信息" rows={meterRows} widths={[115, 128, 116, 128]} pad={1} tight />
              <InfoSection id="state" title="状态信息" rows={stateRows} widths={[121, 120, 120, 120]} pad={14} short />
            </div>
            <div>
              <SectionTitle $flush>其它操作：</SectionTitle>
              <Actions>
                <ActionButton>控制切换</ActionButton>
                <ActionButton>远程设置</ActionButton>
                <ActionButton>即时刷新</ActionButton>
                <ActionButton>其他操作</ActionButton>
              </Actions>
              <SectionTitle $flush>阀门控制：</SectionTitle>
              <Actions $low>
                <ActionButton>开阀</ActionButton>
                <ActionButton>关阀</ActionButton>
              </Actions>
            </div>
          </Content>
          <ScrollBar $vertical>
            <ScrollButton aria-label="向上"><Chevron dir="up" /></ScrollButton>
            <Thumb $vertical $size={436}><Grip vertical /></Thumb>
            <ThumbSpace $size={12} />
            <ScrollButton aria-label="向下"><Chevron dir="down" /></ScrollButton>
          </ScrollBar>
          <ScrollBar>
            <ScrollButton aria-label="向左"><Chevron dir="left" /></ScrollButton>
            <Thumb $size={732}><Grip /></Thumb>
            <ThumbSpace $size={34} />
            <ScrollButton aria-label="向右"><Chevron dir="right" /></ScrollButton>
          </ScrollBar>
          <Corner />
        </Frame>
      </Body>
    </Page>

    <StatusBar>
      <IePage />
      <StatusText>完毕</StatusText>
      <StatusPanes>
        <Pane />
        <Pane><CheckPageIcon /></Pane>
        <Pane />
        <Pane />
        <Pane />
        <Pane $wide><GlobeIcon /></Pane>
      </StatusPanes>
    </StatusBar>

    <TaskBar>
      <StartButton><Flag size={18} />开始</StartButton>
      <QuickLaunch>
        <IeLogo />
        <ComputerIcon />
        <ToolsIcon />
      </QuickLaunch>
      <TaskList>
        {tasks.map((task, i) => (
          <Task key={i} $active={task.active}>
            {task.icon}
            <span>
              {task.prefix && <Mono>{task.prefix}</Mono>}
              {task.text}
              <Mono>{task.latin}</Mono>
            </span>
          </Task>
        ))}
      </TaskList>
      <Keyboard><KeyboardIcon /></Keyboard>
      <Tray>
        <TrayToggle aria-label="显示图标">
          <svg width="18" height="18">
            <circle cx="9" cy="9" r="8.500" fill="#2c94f0" stroke="#8cc8fc" />
            <path d="m11 5-4 4 4 4" fill="none" stroke="#fff" strokeWidth="2" />
          </svg>
        </TrayToggle>
        <NetworkIcon />
        <ServerIcon />
        <MonitorIcon />
        <Mono>11:31</Mono>
      </Tray>
    </TaskBar>

    <Watermark><Accent>河南</Accent>龙网</Watermark>
  </Window>
);

export default App;
